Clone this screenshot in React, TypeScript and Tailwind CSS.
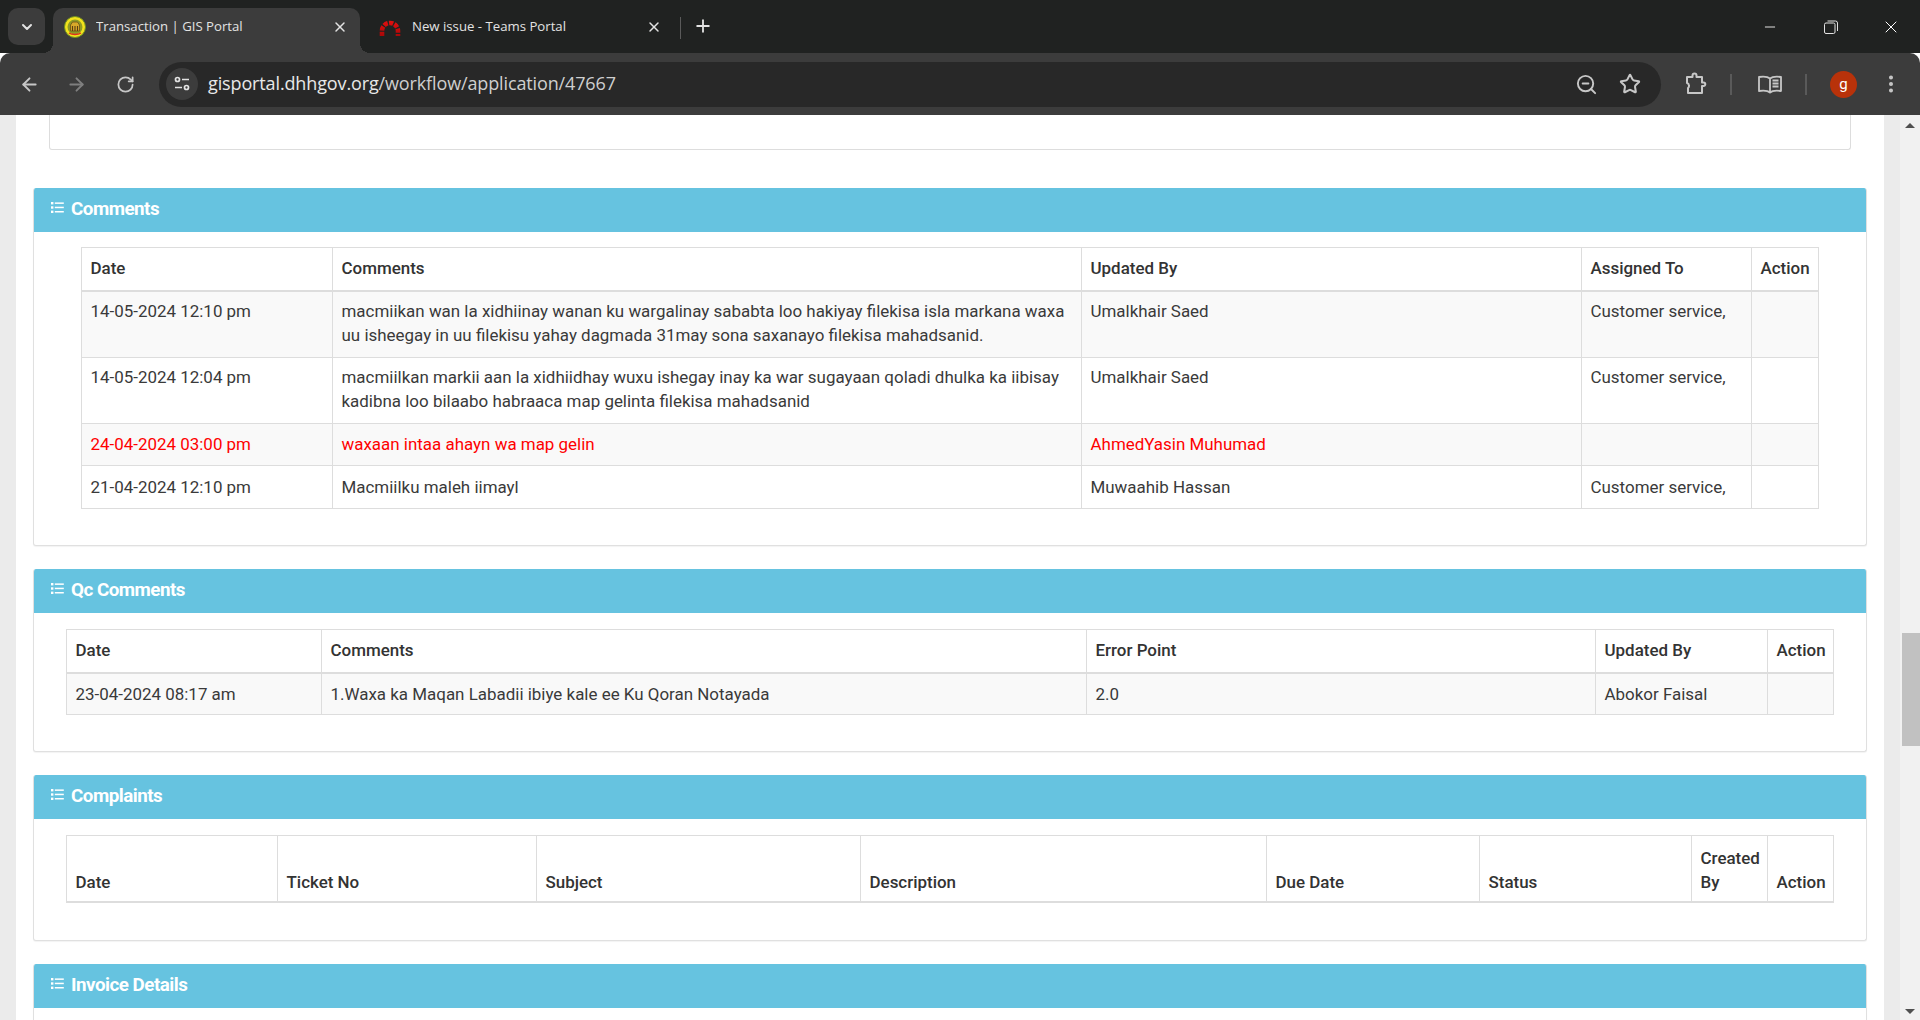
import { ArrowLeft, ArrowRight, ChevronDown, Minus, Plus, RotateCw, Star, X, ZoomOut, EllipsisVertical } from "lucide-react";
import type { ReactNode } from "react";

type Column = { label: ReactNode; width: number };

const commentColumns: Column[] = [
  { label: "Date", width: 251 },
  { label: "Comments", width: 749 },
  { label: "Updated By", width: 500 },
  { label: "Assigned To", width: 170 },
  { label: "Action", width: 67 },
];

const commentRows = [
  {
    date: "14-05-2024 12:10 pm",
    text: "macmiikan wan la xidhiinay wanan ku wargalinay sababta loo hakiyay filekisa isla markana waxa uu isheegay in uu filekisu yahay dagmada 31may sona saxanayo filekisa mahadsanid.",
    by: "Umalkhair Saed",
    to: "Customer service,",
  },
  {
    date: "14-05-2024 12:04 pm",
    text: "macmiilkan markii aan la xidhiidhay wuxu ishegay inay ka war sugayaan qoladi dhulka ka iibisay kadibna loo bilaabo habraaca map gelinta filekisa mahadsanid",
    by: "Umalkhair Saed",
    to: "Customer service,",
  },
  {
    date: "24-04-2024 03:00 pm",
    text: "waxaan intaa ahayn wa map gelin",
    by: "AhmedYasin Muhumad",
    to: "",
    red: true,
  },
  {
    date: "21-04-2024 12:10 pm",
    text: "Macmiilku maleh iimayl",
    by: "Muwaahib Hassan",
    to: "Customer service,",
  },
];

const qcColumns: Column[] = [
  { label: "Date", width: 255 },
  { label: "Comments", width: 765 },
  { label: "Error Point", width: 509 },
  { label: "Updated By", width: 172 },
  { label: "Action", width: 66 },
];

const complaintColumns: Column[] = [
  { label: "Date", width: 211 },
  { label: "Ticket No", width: 259 },
  { label: "Subject", width: 324 },
  { label: "Description", width: 406 },
  { label: "Due Date", width: 213 },
  { label: "Status", width: 212 },
  { label: "Created By", width: 76 },
  { label: "Action", width: 66 },
];

function ListIcon() {
  return (
    <svg width="13" height="13" viewBox="0 0 13 13" className="mt-[-4px] shrink-0" fill="#fff">
      <rect x="0" y="1" width="2.4" height="2.4" />
      <rect x="0" y="5.3" width="2.4" height="2.4" />
      <rect x="0" y="9.6" width="2.4" height="2.4" />
      <rect x="3.8" y="1.4" width="9" height="1.5" />
      <rect x="3.8" y="5.7" width="9" height="1.5" />
      <rect x="3.8" y="10" width="9" height="1.5" />
    </svg>
  );
}

function Panel({ title, children, bodyClass }: { title: string; children?: ReactNode; bodyClass: string }) {
  return (
    <section className="overflow-hidden rounded-[3px] border border-t-0 border-[#e0e0e0] bg-white shadow-[0_1px_1px_rgba(0,0,0,0.05)]">
      <h3 className="flex h-[44px] items-center gap-[7px] bg-[#66c3e0] pb-[1px] pl-[17px] text-[18.8px] font-bold tracking-[-0.5px] text-white">
        <ListIcon />
        {title}
      </h3>
      <div className={bodyClass}>{children}</div>
    </section>
  );
}

function HeadRow({ columns, bottom }: { columns: Column[]; bottom?: boolean }) {
  return (
    <thead>
      <tr>
        {columns.map((col, i) => (
          <th
            key={i}
            className={`h-[43px] border border-b-2 border-[#dddddd] px-[8.5px] py-0 text-left font-medium text-[#333333] ${bottom ? "pb-[7px] align-bottom leading-[24px]" : "align-middle"}`}
          >
            {col.label}
          </th>
        ))}
      </tr>
    </thead>
  );
}

function Cols({ columns }: { columns: Column[] }) {
  return (
    <colgroup>
      {columns.map((col, i) => (
        <col key={i} style={{ width: col.width }} />
      ))}
    </colgroup>
  );
}

function GisFavicon() {
  return (
    <svg width="22" height="22" viewBox="0 0 22 22" className="shrink-0">
      <circle cx="11" cy="11" r="10.500" fill="#f2e21c" stroke="#6f8f22" />
      <circle cx="11" cy="11" r="7.500" fill="#8f9a26" />
      <path d="M6.500 15V9l2-3h5l2 3v6z" fill="#d8a92a" stroke="#6b4f16" strokeWidth="0.800" />
      <path d="M8.500 15v-5M11 15v-5M13.500 15v-5" stroke="#5b3f12" strokeWidth="1.100" />
      <path d="M5 17c3 2 9 2 12 0" stroke="#e0301e" strokeWidth="1.300" fill="none" />
    </svg>
  );
}

function IssueFavicon() {
  return (
    <svg width="24" height="22" viewBox="0 0 24 22" className="shrink-0" fill="none">
      <defs>
        <linearGradient id="arch" x1="0" y1="2" x2="0" y2="20" gradientUnits="userSpaceOnUse">
          <stop offset="0" stopColor="#ee1111" />
          <stop offset="1" stopColor="#a80808" />
        </linearGradient>
      </defs>
      <path d="M4 20v-5a8 8 0 0 1 16 0v5" stroke="url(#arch)" strokeWidth="4.600" strokeDasharray="4.200 1.300" />
    </svg>
  );
}

function ExtensionIcon() {
  return (
    <svg width="24" height="24" viewBox="0 0 24 24" fill="none" stroke="#c7c7c7" strokeWidth="2" strokeLinejoin="round">
      <path d="M3 5h5.500V3.500a2 2 0 0 1 4 0V5H18v5.500h1.500a1.800 1.800 0 0 1 0 3.600H18V21H4v-5a2.500 2.500 0 0 0 1-2.500A2.800 2.800 0 0 0 3 11z" />
    </svg>
  );
}

function ReaderIcon() {
  return (
    <svg width="26" height="24" viewBox="0 0 26 24" fill="none" stroke="#c7c7c7" strokeWidth="1.800" strokeLinejoin="round">
      <path d="M13 6.500C11 4.800 6 4.500 2 5v14c4-.5 9-.3 11 1.500 2-1.800 7-2 11-1.500V5c-4-.5-9-.2-11 1.500zM13 6.500v14" />
      <path d="M15.500 8.500h6M15.500 11.500h6M15.500 14.500h6" strokeWidth="2" />
    </svg>
  );
}

function SiteControlsIcon() {
  return (
    <svg width="16" height="16" viewBox="0 0 16 16" fill="none" stroke="#e3e3e3" strokeWidth="1.700">
      <circle cx="3.500" cy="3.500" r="2" />
      <path d="M8 3.500h7M1 11.500h7" />
      <circle cx="12.500" cy="11.500" r="2" />
    </svg>
  );
}

function Tab({ active, icon, title, width }: { active?: boolean; icon: ReactNode; title: string; width: number }) {
  return (
    <div
      style={{ width }}
      className={`relative flex h-[45px] items-center pb-[8px] pl-[11px] pr-[12px] text-[13.2px] text-[#e3e3e3] ${active ? "rounded-t-[10px] bg-[#3c3c3c]" : ""}`}
    >
      {active ? (
        <>
          <span className="absolute bottom-0 left-[-10px] h-[10px] w-[10px] bg-[radial-gradient(circle_at_0_0,transparent_10px,#3c3c3c_10px)]" />
          <span className="absolute bottom-0 right-[-10px] h-[10px] w-[10px] bg-[radial-gradient(circle_at_100%_0,transparent_10px,#3c3c3c_10px)]" />
        </>
      ) : null}
      {icon}
      <span className="ml-[10px] flex-1 truncate">{title}</span>
      <X size={16} strokeWidth={2.2} color="#e3e3e3" />
    </div>
  );
}

export default function App() {
  return (
    <div className="flex h-[1020px] w-[1920px] flex-col overflow-hidden bg-white font-['Roboto',sans-serif] text-[16.95px] text-[#3a3a3a]">
      {/* title bar */}
      <div className="flex h-[53px] shrink-0 items-end bg-[#202221] font-['Open_Sans',sans-serif]">
        <div className="mb-[8px] ml-[8px] flex h-[37px] w-[37px] items-center justify-center rounded-[10px] bg-[#3c3c3c]">
          <ChevronDown size={16} strokeWidth={3} color="#e3e3e3" />
        </div>
        <div className="ml-[8px]">
          <Tab active icon={<GisFavicon />} title="Transaction | GIS Portal" width={307} />
        </div>
        <div className="ml-[7px]">
          <Tab icon={<IssueFavicon />} title="New issue - Teams Portal" width={307} />
        </div>
        <div className="mb-[14px] ml-[6px] h-[22px] w-px bg-[#5a5a5a]" />
        <Plus size={20} strokeWidth={2.2} color="#e3e3e3" className="mb-[17px] ml-[12px]" />
        <div className="flex-1" />
        <div className="mb-[8px] flex h-[36px] items-center text-white">
          <div className="flex w-[61px] justify-center"><Minus size={16} strokeWidth={1.3} /></div>
          <div className="flex w-[61px] justify-center">
            <svg width="14" height="14" viewBox="0 0 14 14" fill="none" stroke="#e3e3e3" strokeWidth="1">
              <rect x="0.500" y="3" width="10.500" height="10.500" rx="1.500" />
              <path d="M3.500 1h8a2 2 0 0 1 2 2v8" />
            </svg>
          </div>
          <div className="flex w-[59px] justify-center"><X size={20} strokeWidth={1.2} /></div>
        </div>
      </div>

      {/* toolbar */}
      <div className="flex h-[62px] shrink-0 items-center rounded-t-[10px] bg-[#3c3c3c] font-['Open_Sans',sans-serif]">
        <ArrowLeft size={21} strokeWidth={2.2} color="#c7c7c7" className="ml-[19px]" />
        <ArrowRight size={21} strokeWidth={2.2} color="#7f7f7f" className="ml-[26px]" />
        <RotateCw size={19} strokeWidth={2.2} color="#c7c7c7" className="ml-[29px]" />
        <div className="ml-[24px] flex h-[45px] w-[1502px] items-center rounded-full bg-[#282828] pl-[7px] pr-[20px]">
          <div className="flex h-[32px] w-[32px] items-center justify-center rounded-full bg-[#3c3c3c]">
            <SiteControlsIcon />
          </div>
          <span className="ml-[10px] flex-1 pb-[1px] text-[18px] tracking-[-0.13px] text-[#e8e8e8]">
            gisportal.dhhgov.org<span className="text-[#cfcfcf]">/workflow/application/47667</span>
          </span>
          <ZoomOut size={23} strokeWidth={2} color="#c7c7c7" />
          <Star size={22} strokeWidth={2.2} color="#c7c7c7" className="ml-[21px]" />
        </div>
        <div className="ml-[23px]"><ExtensionIcon /></div>
        <div className="ml-[22px] h-[21px] w-[2px] bg-[#5a5a5a]" />
        <div className="ml-[25px]"><ReaderIcon /></div>
        <div className="ml-[22px] h-[21px] w-[2px] bg-[#5a5a5a]" />
        <div className="ml-[23px] flex h-[27px] w-[27px] items-center justify-center rounded-full bg-[#b8320a] font-['Roboto',sans-serif] text-[15px] text-white">g</div>
        <EllipsisVertical size={22} strokeWidth={2.4} color="#c7c7c7" className="ml-[23px]" />
      </div>

      {/* page */}
      <div className="flex min-h-0 flex-1">
        <div className="w-[16px] shrink-0 bg-[#ebebeb]" />
        <main className="w-[1868px] shrink-0 overflow-hidden pl-[17px] pr-[17px]">
          <div className="ml-[16px] mr-[16px] h-[35px] rounded-b-[3px] border border-t-0 border-[#dddddd] bg-white" />

          <div className="mt-[38px] flex flex-col gap-[23px]">
            <Panel title="Comments" bodyClass="h-[313px] pl-[47px] pr-[47px] pt-[15px]">
              <table className="w-[1737px] table-fixed border-collapse">
                <Cols columns={commentColumns} />
                <HeadRow columns={commentColumns} />
                <tbody className="leading-[24.5px]">
                  {commentRows.map((row, i) => {
                    const cell = `border border-[#dddddd] px-[8.5px] ${i < 2 ? "pb-[9px] pt-[7px] align-top" : "h-[42.5px] py-0 align-middle"}`;
                    return (
                      <tr key={i} className={`${i % 2 === 0 ? "bg-[#f9f9f9]" : "bg-white"} ${row.red ? "text-[#ff0000]" : ""}`}>
                        <td className={cell}>{row.date}</td>
                        <td className={cell}>{row.text}</td>
                        <td className={cell}>{row.by}</td>
                        <td className={cell}>{row.to}</td>
                        <td className={cell} />
                      </tr>
                    );
                  })}
                </tbody>
              </table>
            </Panel>

            <Panel title="Qc Comments" bodyClass="h-[138px] pl-[32px] pr-[31px] pt-[16px]">
              <table className="w-[1767px] table-fixed border-collapse">
                <Cols columns={qcColumns} />
                <HeadRow columns={qcColumns} />
                <tbody className="leading-[24px]">
                  <tr className="bg-[#f9f9f9]">
                    <td className="h-[42px] border border-[#dddddd] px-[8.5px] py-0">23-04-2024 08:17 am</td>
                    <td className="h-[42px] border border-[#dddddd] px-[8.5px] py-0">1.Waxa ka Maqan Labadii ibiye kale ee Ku Qoran Notayada</td>
                    <td className="h-[42px] border border-[#dddddd] px-[8.5px] py-0">2.0</td>
                    <td className="h-[42px] border border-[#dddddd] px-[8.5px] py-0">Abokor Faisal</td>
                    <td className="h-[42px] border border-[#dddddd] px-[8.5px] py-0" />
                  </tr>
                </tbody>
              </table>
            </Panel>

            <Panel title="Complaints" bodyClass="h-[121px] pl-[32px] pr-[31px] pt-[16px]">
              <table className="h-[68px] w-[1767px] table-fixed border-collapse">
                <Cols columns={complaintColumns} />
                <HeadRow columns={complaintColumns} bottom />
              </table>
            </Panel>

            <Panel title="Invoice Details" bodyClass="h-[40px]" />
          </div>
        </main>
        <div className="w-[16px] shrink-0 bg-[#ebebeb]" />
        {/* scrollbar */}
        <div className="flex w-[20px] shrink-0 flex-col bg-[#f1f1f1]">
          <div className="mx-auto mt-[8px] h-0 w-0 border-x-[5px] border-b-[5px] border-x-transparent border-b-[#505050]" />
          <div className="ml-[2px] mt-[505px] h-[113px] w-[18px] bg-[#c1c1c1]" />
          <div className="flex-1" />
          <div className="mx-auto mb-[6px] h-0 w-0 border-x-[5px] border-t-[5px] border-x-transparent border-t-[#505050]" />
        </div>
      </div>
    </div>
  );
}
